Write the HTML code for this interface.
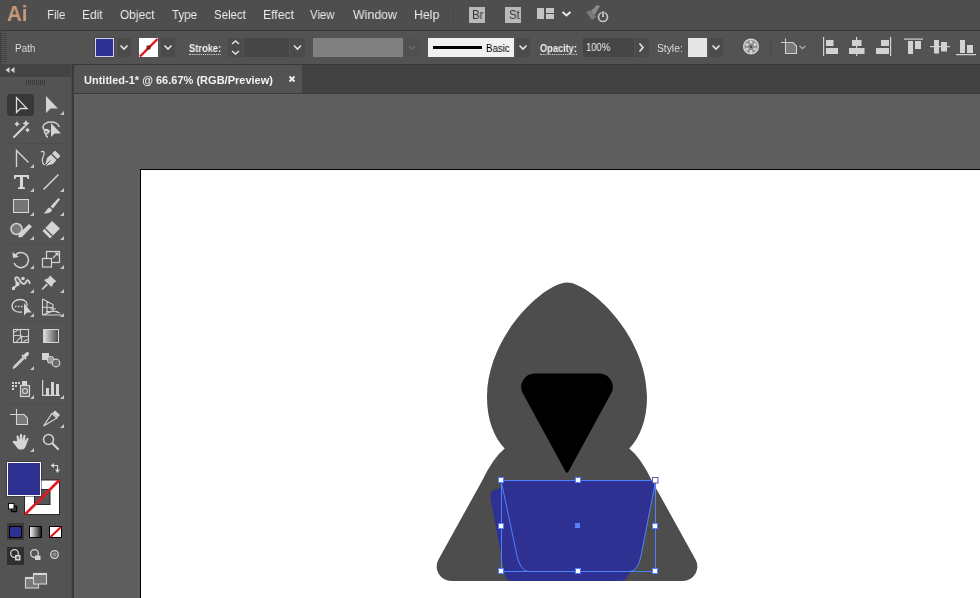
<!DOCTYPE html>
<html><head><meta charset="utf-8"><title>Untitled-1* @ 66.67% (RGB/Preview)</title>
<style>
*{box-sizing:border-box;margin:0;padding:0}
html,body{width:980px;height:598px;overflow:hidden;background:#5f5f5f;font-family:"Liberation Sans","DejaVu Sans",sans-serif;}
body{position:relative}
.abs,.t,.box{position:absolute}
.t{white-space:nowrap;line-height:1;transform-origin:0 0;will-change:transform}
#menubar{left:0;top:0;width:980px;height:30px;background:#4e4e4e}
.m{font-size:13px;color:#ebebeb;top:8px}
#sep1{left:0;top:30px;width:980px;height:1px;background:#383838}
#ctrl{left:0;top:31px;width:980px;height:33px;background:#535353}
.c{font-size:11px;color:#f0f0f0;top:42px}
.dk{background:#4b4b4b}.in{background:#454545}
#tabbar{left:74px;top:64px;width:906px;height:30px;background:#424242;border-top:1px solid #383838;border-bottom:1px solid #3b3b3b}
#tab{left:74px;top:65px;width:228px;height:28px;background:#535353}
#canvas{left:74px;top:94px;width:906px;height:504px;background:#5f5f5f}
#tools{left:0;top:64px;width:72px;height:534px;background:#535353}
#toolshead{left:0;top:64px;width:72px;height:13px;background:#444}
#vsep{left:71px;top:64px;width:3px;height:534px;background:#3a3a3a;border-left:1px solid #4a4a4a}
#artboard{left:140px;top:169px;width:841px;height:430px;background:#fff;border:1px solid #000}
svg{position:absolute;left:0;top:0}
</style></head><body>
<div class="abs" id="menubar"></div>
<div class="t" id="ai" style="left:7.35px;top:4px;font-size:21.5px;transform:scaleX(0.953);font-weight:bold;color:#c89a7b;">Ai</div>
<div class="t m" style="left:46.73px;top:8px;font-size:13px;transform:scaleX(0.875);">File</div>
<div class="t m" style="left:81.58px;top:8px;font-size:13px;transform:scaleX(0.919);">Edit</div>
<div class="t m" style="left:119.60px;top:8px;font-size:13px;transform:scaleX(0.918);">Object</div>
<div class="t m" style="left:171.60px;top:8px;font-size:13px;transform:scaleX(0.886);">Type</div>
<div class="t m" style="left:213.62px;top:8px;font-size:13px;transform:scaleX(0.880);">Select</div>
<div class="t m" style="left:262.76px;top:8px;font-size:13px;transform:scaleX(0.938);">Effect</div>
<div class="t m" style="left:310.00px;top:8px;font-size:13px;transform:scaleX(0.875);">View</div>
<div class="t m" style="left:352.90px;top:8px;font-size:13px;transform:scaleX(0.950);">Window</div>
<div class="t m" style="left:413.95px;top:8px;font-size:13px;transform:scaleX(0.948);">Help</div>
<div class="box" style="left:469px;top:7px;width:16px;height:16px;background:#b9b9b9"></div>
<div class="t" style="left:471.500px;top:9px;font-size:12px;color:#383838;transform:scaleX(0.95)">Br</div>
<div class="box" style="left:505px;top:7px;width:16px;height:16px;background:#b9b9b9"></div>
<div class="t" style="left:508.500px;top:9px;font-size:12px;color:#383838;transform:scaleX(0.95)">St</div>
<div class="abs" id="sep1"></div>
<div class="abs" id="ctrl"></div>
<div class="t c" style="left:14.81px;top:44px;font-size:10px;transform:scaleX(0.989);color:#dcdcdc">Path</div>
<div class="box" style="left:95px;top:38px;width:19px;height:19px;background:#2e3192;border:1px solid #d4d4ee;outline:1px solid #474747"></div>
<div class="box dk" style="left:117px;top:38px;width:14px;height:19px"></div>
<div class="box" style="left:139px;top:38px;width:19px;height:19px;background:#fff"></div>
<div class="box dk" style="left:161px;top:38px;width:14px;height:19px"></div>
<div class="t c" style="left:188.60px;top:44px;font-size:10px;transform:scaleX(0.935);font-weight:bold;border-bottom:1px dotted #ddd;padding-bottom:0px">Stroke:</div>
<div class="box dk" style="left:228px;top:38px;width:15px;height:19px"></div>
<div class="box in" style="left:244px;top:38px;width:45px;height:19px"></div>
<div class="box dk" style="left:290px;top:38px;width:15px;height:19px"></div>
<div class="box" style="left:313px;top:38px;width:90px;height:19px;background:#808080"></div>
<div class="box" style="left:405px;top:38px;width:14px;height:19px;background:#505050"></div>
<div class="box" style="left:428px;top:38px;width:86px;height:19px;background:#f0f0f0"></div>
<div class="box" style="left:433px;top:46px;width:49px;height:3px;background:#000"></div>
<div class="t" style="left:485.83px;top:44px;font-size:10px;transform:scaleX(0.965);color:#000">Basic</div>
<div class="box dk" style="left:516px;top:38px;width:14px;height:19px"></div>
<div class="t c" style="left:540.00px;top:44px;font-size:10px;transform:scaleX(0.923);font-weight:bold;border-bottom:1px dotted #ddd;padding-bottom:0px">Opacity:</div>
<div class="box in" style="left:583px;top:38px;width:51px;height:19px"></div>
<div class="t c" style="left:585.86px;top:43px;font-size:10px;transform:scaleX(0.944);">100%</div>
<div class="box dk" style="left:635px;top:38px;width:14px;height:19px"></div>
<div class="t c" style="left:657.00px;top:44px;font-size:10px;transform:scaleX(1.029);color:#dcdcdc">Style:</div>
<div class="box" style="left:688px;top:38px;width:19px;height:19px;background:#e6e6e6"></div>
<div class="box dk" style="left:709px;top:38px;width:14px;height:19px"></div>
<div class="abs" id="tabbar"></div>
<div class="abs" id="tab"></div>
<div class="t" id="tabt" style="left:83.60px;top:75px;font-size:11px;transform:scaleX(1.002);font-weight:bold;color:#f2f2f2">Untitled-1* @ 66.67% (RGB/Preview)</div>
<div class="abs" id="canvas"></div>
<div class="abs" id="tools"></div>
<div class="abs" id="toolshead"></div>
<div class="abs" id="vsep"></div>
<div class="abs" id="artboard"></div>
<svg id="art" width="980" height="598" viewBox="0 0 980 598">
<!-- hooded figure -->
<path d="M567 282.5 C589 282.5 647 335 647 397 C647 420 640 437 629.3 448.600 Q641 458 652 481 L695.500 559.400 A14.500 14.500 0 0 1 682.800 581 L451.200 581 A14.500 14.500 0 0 1 438.500 559.400 L482 481 Q493 458 504.700 448.600 C494 437 487 420 487 397 C487 335 545 282.500 567 282.500 Z" fill="#4d4d4d"/>
<path d="M535 373.500 L599 373.500 A13.500 13.500 0 0 1 610.800 394 L568.500 471.500 Q567 474 565.500 471.500 L523.200 394 A13.500 13.500 0 0 1 535 373.500 Z" fill="#000"/>
<path d="M501 483 Q501 480 504 480 L652 480 Q655.500 480 655 484 L640 558 Q637 570 631 571 L626 579 Q624 581 620 581 L512 581 Q506 581 505 575 L490.500 498 Q489.500 490 497 489 L501 488 Z" fill="#2e3192"/>
<!--SEL-->
<g fill="none" stroke="#4f80ff" stroke-width="1">
<rect x="501.500" y="480.500" width="154" height="91"/>
<path d="M504 480.500 L652 480.500 Q655.500 480.500 655 484 L641 556 Q638.500 570 630 571.500 L528 571.500 Q521 570.500 517.500 558 L502 485 Q501.500 480.500 504 480.500 Z"/>
</g>
<g fill="#fff" stroke="#4f80ff" stroke-width="1">
<rect x="498.500" y="477.500" width="5" height="5"/><rect x="575.500" y="477.500" width="5" height="5"/>
<rect x="498.500" y="523.500" width="5" height="5"/><rect x="652.500" y="523.500" width="5" height="5"/>
<rect x="498.500" y="568.500" width="5" height="5"/><rect x="575.500" y="568.500" width="5" height="5"/><rect x="652.500" y="568.500" width="5" height="5"/>
</g>
<rect x="652.500" y="477.500" width="5.500" height="5.500" fill="#fff" stroke="#5a5aa0" stroke-width="1"/>
<rect x="575" y="523" width="5" height="5" fill="#4f80ff"/>

<!--/SEL-->
</svg>
<svg id="icons" width="980" height="598" viewBox="0 0 980 598">
<!--ICONS-->
<!--TOP-->
<!-- menu bar icons -->
<rect x="453" y="5" width="1" height="20" fill="#484848"/>
<g fill="#c4c4c4"><rect x="537" y="8" width="7" height="11"/><rect x="546" y="8" width="8" height="5"/><rect x="546" y="14" width="8" height="5"/></g>
<path d="M562.500 12 L566.500 15.500 L570.500 12" fill="none" stroke="#e8e8e8" stroke-width="2"/>
<!-- gpu rocket -->
<g><path d="M588 14 L597 5 L600 6 L594 16 Z" fill="#8a8a8a"/><path d="M586 12 L591 10 L596 17 L592 20 Z" fill="#7a7a7a"/><circle cx="603" cy="17" r="4.500" fill="none" stroke="#c8c8c8" stroke-width="1.600"/><path d="M603 11 V17" stroke="#c8c8c8" stroke-width="1.600"/><path d="M603 10.500 V16" stroke="#4a4a4a" stroke-width="3.600" opacity="0.550"/><path d="M603 11.500 V17" stroke="#c8c8c8" stroke-width="1.500"/></g>
<!-- control bar grip -->
<g fill="#444"><rect x="0" y="33" width="7" height="1"/><rect x="0" y="35" width="7" height="1"/><rect x="0" y="37" width="7" height="1"/><rect x="0" y="39" width="7" height="1"/><rect x="0" y="41" width="7" height="1"/><rect x="0" y="43" width="7" height="1"/><rect x="0" y="45" width="7" height="1"/><rect x="0" y="47" width="7" height="1"/><rect x="0" y="49" width="7" height="1"/><rect x="0" y="51" width="7" height="1"/><rect x="0" y="53" width="7" height="1"/><rect x="0" y="55" width="7" height="1"/><rect x="0" y="57" width="7" height="1"/><rect x="0" y="59" width="7" height="1"/><rect x="0" y="61" width="7" height="1"/></g><rect x="0" y="31" width="1" height="33" fill="#3e3e3e"/>
<!-- chevrons -->
<g fill="none" stroke="#e6e6e6" stroke-width="1.600">
<path d="M120.500 45.500 L124 49 L127.500 45.500"/>
<path d="M164.500 45.500 L168 49 L171.500 45.500"/>
<path d="M294 45.500 L297.500 49 L301 45.500"/>
<path d="M519.500 45.500 L523 49 L526.500 45.500"/>
<path d="M712.500 45.500 L716 49 L719.500 45.500"/>
<path d="M639.500 43.500 L643 47.500 L639.500 51.500"/>
<path d="M232 44 L235.500 41 L239 44" stroke-width="1.400"/>
<path d="M232 51 L235.500 54 L239 51" stroke-width="1.400"/>
</g>
<path d="M409 46 L412 49 L415 46" fill="none" stroke="#696969" stroke-width="1.500"/>
<!-- stroke none swatch -->
<path d="M140 56.500 L157.500 39" stroke="#e3151f" stroke-width="2.400" fill="none"/>
<rect x="147" y="46" width="3" height="3" fill="#e3151f" stroke="#401010" stroke-width="0.800"/>
<!-- recolor wheel -->
<circle cx="751" cy="46.500" r="7.300" fill="#8c8c8c" stroke="#d4d4d4" stroke-width="1.500"/>
<g fill="#d4d4d4"><circle cx="751" cy="42" r="1.600"/><circle cx="755" cy="44.500" r="1.600"/><circle cx="755" cy="49" r="1.600"/><circle cx="751" cy="51.500" r="1.600"/><circle cx="747" cy="49" r="1.600"/><circle cx="747" cy="44.500" r="1.600"/></g>
<circle cx="751" cy="46.700" r="1.300" fill="#4a4a4a"/>
<rect x="770" y="36" width="1" height="23" fill="#4a4a4a"/>
<!-- document setup -->
<g fill="none" stroke="#d0d0d0" stroke-width="1.100"><path d="M785.500 38.500 V42 M781 42.500 H785"/><path d="M785.500 42.500 H793 L796.500 46 V53.500 H785.500 Z" fill="#787878"/></g>
<path d="M799.500 46 L802.500 48.500 L805.500 46" fill="none" stroke="#a8a8a8" stroke-width="1.400"/>
<!-- align icons -->
<g fill="#d2d2d2">
<rect x="823" y="37" width="1.200" height="19"/><rect x="826" y="40" width="7.500" height="6"/><rect x="826" y="48" width="12" height="6"/>
<rect x="856" y="37" width="1.200" height="19"/><rect x="852" y="40" width="9.500" height="6"/><rect x="849" y="48" width="15.500" height="6"/>
<rect x="890" y="37" width="1.200" height="19"/><rect x="881" y="40" width="8" height="6"/><rect x="876" y="48" width="13" height="6"/>
<rect x="904" y="38.500" width="19" height="1.200"/><rect x="908" y="41" width="5" height="13"/><rect x="915" y="41" width="6" height="8"/>
<rect x="930" y="46" width="20" height="1.200"/><rect x="934" y="40" width="5" height="13.500"/><rect x="941" y="42" width="6" height="9.500"/>
<rect x="956" y="54" width="20" height="1.200"/><rect x="960" y="40" width="5" height="13"/><rect x="967" y="45" width="6" height="8"/>
</g>
<!-- tab close -->
<path d="M289.500 76.500 L294.500 81.500 M294.500 76.500 L289.500 81.500" stroke="#f0f0f0" stroke-width="1.800" fill="none"/>

<!--/TOP-->
<!--TOOLS-->
<g fill="#d2d2d2" stroke="none">
<!-- collapse arrows -->
<path d="M5.500 70 L9.500 67 L9.500 73 Z M10.500 70 L14.500 67 L14.500 73 Z"/>
<!-- flyout corner triangles -->
<g fill="#c4c4c4">
<path d="M64 111 v4 h-4 z"/>
<path d="M34 164 v4 h-4 z"/>
<path d="M34 188 v4 h-4 z"/><path d="M64 188 v4 h-4 z"/>
<path d="M34 212 v4 h-4 z"/><path d="M64 212 v4 h-4 z"/>
<path d="M34 236 v4 h-4 z"/><path d="M64 236 v4 h-4 z"/>
<path d="M34 265 v4 h-4 z"/><path d="M64 265 v4 h-4 z"/>
<path d="M34 289 v4 h-4 z"/><path d="M64 289 v4 h-4 z"/>
<path d="M34 313 v4 h-4 z"/><path d="M64 313 v4 h-4 z"/>
<path d="M34 366 v4 h-4 z"/>
<path d="M34 395 v4 h-4 z"/><path d="M64 395 v4 h-4 z"/>
<path d="M64 424 v4 h-4 z"/>
<path d="M34 448 v4 h-4 z"/>
</g>
</g>
<!-- grip -->
<g fill="#3d3d3d"><rect x="26" y="80" width="1" height="5"/><rect x="28" y="80" width="1" height="5"/><rect x="30" y="80" width="1" height="5"/><rect x="32" y="80" width="1" height="5"/><rect x="34" y="80" width="1" height="5"/><rect x="36" y="80" width="1" height="5"/><rect x="38" y="80" width="1" height="5"/><rect x="40" y="80" width="1" height="5"/><rect x="42" y="80" width="1" height="5"/><rect x="44" y="80" width="1" height="5"/></g>
<!-- separators in tools panel -->
<g fill="#4d4d4d"><rect x="8" y="143" width="56" height="1"/><rect x="8" y="244" width="56" height="1"/><rect x="8" y="321" width="56" height="1"/><rect x="8" y="403" width="56" height="1"/></g>
<!-- selected tool bg -->
<rect x="7" y="94" width="27" height="22" rx="3" fill="#383838"/>
<!-- selection tool (outline arrow) -->
<path d="M16.500 97.500 L16.500 112.500 L20.500 108.500 L27 108.500 Z" fill="none" stroke="#dcdcdc" stroke-width="1.300" stroke-linejoin="miter"/>
<!-- direct selection (filled arrow) -->
<path d="M46 96 L46 113 L50.500 108.500 L58 108.500 Z" fill="#d4d4d4"/>
<!-- magic wand -->
<g stroke="#d4d4d4" stroke-width="2" stroke-linecap="round" fill="none"><path d="M14 137 L24.500 126.500"/></g>
<g fill="#d4d4d4"><path d="M17 121 l1 2 2 1 -2 1 -1 2 -1 -2 -2 -1 2 -1z"/><path d="M26 120 l1.200 2.300 2.300 1.200 -2.300 1.200 -1.200 2.300 -1.200 -2.300 -2.300 -1.200 2.300 -1.200z"/><path d="M27.500 127.500 l1 1.500 1.500 1 -1.500 1 -1 1.500 -1 -1.500 -1.500 -1 1.500 -1z"/></g>
<!-- lasso -->
<g fill="none" stroke="#d4d4d4" stroke-width="1.500"><path d="M50 131 C45 131 43 129 43 127 C43 124 47 122 51 122 C55 122 59 124 59 127"/><circle cx="46.500" cy="131.500" r="2"/><path d="M46 134 C46 136 47 137 48 137"/></g>
<path d="M51 123 L51 137 L54.500 133.500 L61 133.500 Z" fill="#d4d4d4"/>
<!-- curvature / anchor tool -->
<path d="M16.500 167 L16.500 150.500 L28.500 162.500" fill="none" stroke="#d4d4d4" stroke-width="1.400"/>
<!-- pen -->
<g fill="#d4d4d4"><path d="M55 150.500 L60.500 156 L57.500 159 L52 153.500 Z"/><path d="M51 154.500 L56.500 160 L53 164 L45 166 L47 158 Z"/></g>
<path d="M45 166 L50.500 160.500" stroke="#535353" stroke-width="1" fill="none"/>
<path d="M41 152 C44 150 45 153 43.500 156 C42 159 41 162 44.500 165" fill="none" stroke="#d4d4d4" stroke-width="1.200"/>
<!-- type tool -->
<g fill="#d8d8d8"><path d="M14 175 h15 v4 h-1.500 l-0.500 -2 h-4 v10 l2 0.500 v1.500 h-7 v-1.500 l2 -0.500 v-10 h-4 l-0.500 2 h-1.500 z"/></g>
<!-- line tool -->
<path d="M44 189 L58 175" stroke="#d4d4d4" stroke-width="1.500" fill="none" stroke-linecap="round"/>
<!-- rectangle tool -->
<rect x="13.500" y="199.500" width="15" height="13" fill="#757575" stroke="#d8d8d8" stroke-width="1"/>
<!-- paintbrush -->
<g fill="#d4d4d4"><path d="M58.500 198 L60 199.500 L53 208.500 L50.500 206.500 Z"/><path d="M49.500 207.500 L52 209.500 C52 212 49 213.500 43.500 213.500 C46.500 212 46.500 208.500 49.500 207.500 Z"/></g>
<!-- shaper / blob -->
<circle cx="16.500" cy="229" r="5.500" fill="#7a7a7a" stroke="#d4d4d4" stroke-width="1.500"/>
<path d="M18.500 237.500 L18.500 234 L29 224 L32 226.500 L22 237 Z" fill="#d4d4d4"/>
<!-- eraser -->
<g fill="#d4d4d4"><path d="M52 221 L60 228.500 L50 238.500 L42.500 231 Z"/></g>
<path d="M45 228.500 L52.500 236" stroke="#535353" stroke-width="1.200" fill="none"/>
<!-- rotate -->
<path d="M15 255.500 A7.500 7.500 0 1 1 14 263" fill="none" stroke="#d4d4d4" stroke-width="1.500"/>
<path d="M12.500 252 L13 258 L19 257 Z" fill="#d4d4d4"/>
<!-- scale -->
<g fill="none" stroke="#d4d4d4" stroke-width="1.200"><rect x="46.500" y="251.500" width="13" height="11"/><rect x="42.500" y="258.500" width="9" height="8.500" fill="#535353"/><path d="M53 258 L57.500 253.500"/></g>
<path d="M58.500 252.500 L58.500 256.500 L54.500 252.500 Z" fill="#d4d4d4"/>
<!-- width tool -->
<g fill="none" stroke="#d4d4d4" stroke-width="1.800"><path d="M13 287.500 C17 287 18 284 16 281 C14 277 17 276 19 279 C21 283 24 286 26 282 C27 279 29 280 30 284"/></g>
<g fill="#d4d4d4"><circle cx="17.500" cy="284" r="2.200"/><circle cx="23" cy="278.500" r="1.800"/><rect x="12" y="287" width="3" height="3"/></g>
<!-- pin -->
<g fill="#d4d4d4"><path d="M50 275.500 L56.500 281.500 L54 282.500 L51.500 287 L44 280 L48.500 278 Z"/><path d="M46.500 283.500 L48 285 L42.500 290 L41.500 289 Z"/></g>
<!-- shape builder -->
<g fill="none" stroke="#d4d4d4" stroke-width="1.400"><path d="M20 299.500 C26 299.500 27.500 303 27 306 M22 312 C15 313 12 309 12 306 C12 302 16 299.500 20 299.500"/><path d="M15 306.500 h9" stroke-dasharray="1.500 1.500"/></g>
<path d="M24 303 L24 315.500 L27 312.500 L31.500 312.500 Z" fill="#d4d4d4"/>
<!-- perspective grid -->
<g fill="none" stroke="#d4d4d4" stroke-width="1.100"><path d="M42.500 299 L42.500 315 M42.500 299 L53 304.500 L53 311 L42.500 315 M47 301.500 L47 313.500 M42.500 307 L53 307.500 M42.500 315 L62 315 M53 311 L60 313 M46 311.500 L58 311.500 M50 309 L56 309"/></g>
<!-- mesh -->
<g fill="none" stroke="#d4d4d4" stroke-width="1.100"><rect x="13.500" y="329.500" width="15" height="13"/><path d="M13.500 336 C18 333 23 339 28.500 336 M21 329.500 C18 334 24 338 21 342.500 M13.500 332.500 C17 331 18 330 19 329.500 M28.500 339.500 C25 340 24 341 23 342.500 M16 342.500 C17 340 19 339 21 337"/></g>
<!-- gradient -->
<defs><linearGradient id="gr1" x1="0" x2="1" y1="0" y2="0"><stop offset="0" stop-color="#e0e0e0"/><stop offset="1" stop-color="#4a4a4a"/></linearGradient>
<linearGradient id="gr2" x1="0" x2="1" y1="0" y2="0"><stop offset="0" stop-color="#ffffff"/><stop offset="1" stop-color="#111"/></linearGradient></defs>
<rect x="43.500" y="329.500" width="15" height="13" fill="url(#gr1)" stroke="#d4d4d4" stroke-width="1"/>
<!-- eyedropper -->
<g><path d="M26 352.500 C28 351 30 353 28.500 355 L25.500 358 L23 355.500 Z" fill="#d4d4d4"/><path d="M22 355 L26 359" stroke="#d4d4d4" stroke-width="1.800" fill="none"/><path d="M23 357.500 L14.500 366 L13 368.500 L15.500 367 L24 358.500" fill="none" stroke="#d4d4d4" stroke-width="1.300"/></g>
<!-- blend -->
<g><rect x="42" y="353" width="7" height="7" fill="#d4d4d4"/><rect x="47.500" y="356.500" width="6" height="6.500" rx="2" fill="#9a9a9a" stroke="#d4d4d4" stroke-width="1"/><circle cx="56" cy="363" r="3.800" fill="#6a6a6a" stroke="#d4d4d4" stroke-width="1.200"/></g>
<!-- symbol sprayer -->
<g fill="#d4d4d4"><rect x="12" y="382" width="2" height="2"/><rect x="15" y="382" width="2" height="2"/><rect x="18" y="382" width="2" height="2"/><rect x="12" y="385" width="2" height="2"/><rect x="15" y="385" width="2" height="2"/><rect x="12" y="388" width="2" height="2"/><rect x="22" y="381" width="5" height="4"/></g>
<rect x="20.500" y="385.500" width="9" height="11" fill="#6a6a6a" stroke="#d4d4d4" stroke-width="1.200"/><circle cx="25" cy="391" r="2.500" fill="none" stroke="#d4d4d4" stroke-width="1.200"/>
<!-- graph -->
<g fill="#d4d4d4"><rect x="42" y="380" width="1.200" height="16"/><rect x="42" y="394.800" width="18" height="1.200"/><rect x="46" y="388" width="3" height="7"/><rect x="51" y="382" width="3" height="13"/><rect x="56" y="384" width="3" height="11"/></g>
<!-- artboard -->
<g fill="none" stroke="#d4d4d4" stroke-width="1.100"><path d="M16.500 409 V414 M10 414.500 H16"/><path d="M16.500 414.500 H24 L27.500 418 V424.500 H16.500 Z" fill="#7a7a7a"/></g>
<!-- slice -->
<g><path d="M55 410.500 L60 415 L57.500 417.500 L52.500 413 Z" fill="#d4d4d4"/><path d="M52 413.500 L57 418 L43.500 426 Z" fill="none" stroke="#d4d4d4" stroke-width="1.200"/></g>
<!-- hand -->
<path d="M17 441 L16.500 436 Q17.500 434.500 18.500 436 L19.500 440 L20 434.500 Q21 433 22 434.500 L22.500 440 L23.500 435.500 Q24.500 434 25.500 435.500 L25 441 L27 438 Q28.500 437 28.500 439 L26 445.500 Q25 449 23 449.500 L19 449.500 Q17 448 15.500 445.500 L12.500 442 Q13 440 15 441 Z" fill="#d4d4d4"/>
<!-- zoom -->
<g fill="none" stroke="#d4d4d4"><circle cx="48.500" cy="439.500" r="5" stroke-width="1.500"/><path d="M52.500 443.500 L58 449" stroke-width="2.200" stroke-linecap="round"/></g>

<!--/TOOLS-->
<!--SW-->
<!-- stroke swatch (behind) -->
<rect x="24.500" y="480" width="35" height="34.500" fill="#fff" stroke="#2a2a2a" stroke-width="1"/>
<rect x="34.500" y="489.500" width="15.500" height="15" fill="#555" stroke="#2a2a2a" stroke-width="1"/>
<path d="M25 514.500 L59.500 480" stroke="#e3151f" stroke-width="2.600" fill="none"/>
<!-- fill swatch -->
<rect x="6.500" y="461.500" width="35" height="35" fill="#2a2a2a"/>
<rect x="7.500" y="462.500" width="33" height="33" fill="#2e3192" stroke="#fff" stroke-width="1"/>
<!-- swap arrows -->
<g fill="none" stroke="#d4d4d4" stroke-width="1.200"><path d="M53 465.500 H57.500 V470"/></g>
<path d="M50.500 465.500 L54 463 L54 468 Z M57.500 473 L55 469.500 L60 469.500 Z" fill="#d4d4d4"/>
<!-- default fill/stroke -->
<rect x="11.500" y="506.500" width="5" height="5" fill="#444" stroke="#0a0a0a" stroke-width="1.500"/>
<rect x="8.500" y="503.500" width="5.500" height="5.500" fill="#fff" stroke="#111" stroke-width="1"/>
<!-- color mode buttons -->
<rect x="7" y="523" width="17" height="17" fill="#383838"/>
<rect x="9.500" y="526.500" width="12" height="11" fill="#2e3192" stroke="#000" stroke-width="1"/>
<rect x="29.500" y="526.500" width="12" height="11" fill="url(#gr2)" stroke="#000" stroke-width="1"/>
<rect x="49.500" y="526.500" width="12" height="11" fill="#fff" stroke="#000" stroke-width="1"/>
<path d="M50.500 537 L61 527" stroke="#e3151f" stroke-width="2.200" fill="none"/>
<!-- drawing modes -->
<rect x="7" y="547" width="17" height="18" fill="#2f2f2f"/>
<g fill="none" stroke="#d4d4d4" stroke-width="1.300"><circle cx="14.500" cy="553.500" r="3.800"/><circle cx="34.500" cy="553.500" r="3.800"/><circle cx="54.500" cy="554.500" r="3.800"/></g>
<rect x="15" y="555" width="5.500" height="5.500" fill="#d4d4d4"/>
<rect x="16.500" y="556.500" width="2.500" height="2.500" fill="#555"/>
<rect x="35" y="555.500" width="5.500" height="4.500" fill="#d4d4d4"/>
<circle cx="54.500" cy="554.500" r="2.200" fill="#8a8a8a"/>
<!-- screen mode -->
<g stroke="#d4d4d4" stroke-width="1.100" fill="#787878"><rect x="25.500" y="577.500" width="13" height="10.500"/><rect x="33.500" y="573.500" width="13" height="10.500"/></g>
<g fill="#d4d4d4"><rect x="25" y="577" width="8" height="2"/><rect x="33" y="573" width="14" height="2"/></g>

<!--/SW-->
</svg>
</body></html>
